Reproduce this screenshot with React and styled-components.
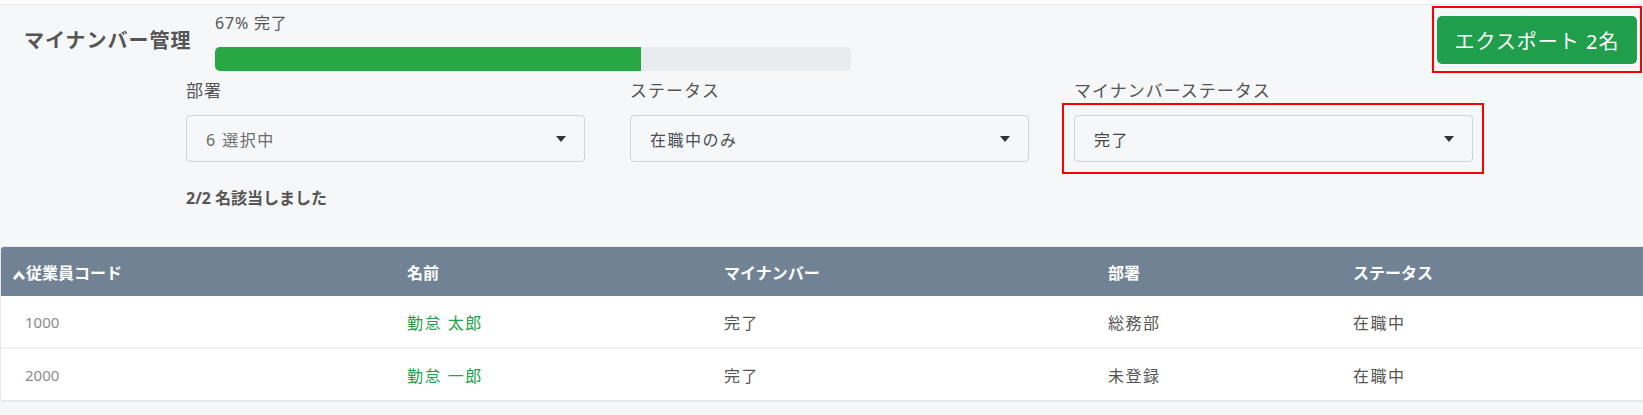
import React from "react";
import styled, { createGlobalStyle } from "styled-components";

const Global = createGlobalStyle`
  html, body { margin: 0; padding: 0; }
  body {
    background: #f6f7f9;
    font-family: "Noto Sans", "Noto Sans CJK JP", sans-serif;
    color: #555;
  }
  * { box-sizing: border-box; }
`;

const Page = styled.div`
  width: 1643px;
  min-height: 415px;
  background: #f6f7f9;
`;

const TopStrip = styled.div`
  height: 5px;
  background: #fff;
  border-bottom: 1px solid #e8eaed;
`;

const HeaderRow = styled.div`
  display: flex;
  align-items: flex-start;
  padding: 0 1px 0 24px;
`;

const Title = styled.h1`
  flex: 0 0 191px;
  margin: 0;
  padding-top: 23px;
  font-size: 20px;
  line-height: 26px;
  font-weight: 700;
  letter-spacing: 1px;
  color: #555;
`;

const ProgressBlock = styled.div`
  width: 636px;
  padding-top: 8px;
`;

const ProgressLabel = styled.div`
  font-size: 16px;
  line-height: 20px;
  letter-spacing: 0.8px;
  color: #555;
`;

const Track = styled.div`
  margin-top: 14px;
  height: 24px;
  border-radius: 5px;
  background: #e9ecef;
  overflow: hidden;
`;

const Fill = styled.div`
  height: 100%;
  background: #28a745;
`;

const Spacer = styled.div`
  flex: 1;
`;

const Highlight = styled.div`
  margin-top: 1px;
  border: 2px solid #ff0000;
  padding: 8px 3px 7px 3px;
`;

const ExportButton = styled.button`
  display: flex;
  align-items: center;
  justify-content: center;
  width: 200px;
  height: 48px;
  border: none;
  border-radius: 5px;
  background: #1f9e4b;
  color: #fff;
  font-family: inherit;
  font-size: 20px;
  letter-spacing: 1px;
  cursor: pointer;
`;

const Filters = styled.div`
  padding: 6px 0 0 186px;
`;

const FilterGrid = styled.div`
  display: grid;
  grid-template-columns: repeat(3, 399px);
  column-gap: 45px;
`;

const Field = styled.div`
  display: flex;
  flex-direction: column;
`;

const Label = styled.label`
  font-size: 17px;
  line-height: 24px;
  letter-spacing: 1px;
  color: #555;
  margin-bottom: 12px;
`;

const Select = styled.div`
  position: relative;
  display: flex;
  align-items: center;
  height: 47px;
  padding: 0 40px 0 19px;
  border: 1px solid #cdd4dc;
  border-radius: 4px;
  font-size: 16px;
  letter-spacing: 1.5px;
  color: ${(p) => p.$color || "#495057"};
  ${(p) =>
    p.$marked &&
    `&::after {
      content: "";
      position: absolute;
      left: -13px;
      right: -12px;
      top: -13px;
      bottom: -13px;
      border: 2px solid #ff0000;
      pointer-events: none;
    }`}
`;

const Caret = styled.span`
  position: absolute;
  right: 18px;
  top: 50%;
  margin-top: -3px;
  width: 0;
  height: 0;
  border-left: 5.5px solid transparent;
  border-right: 5.5px solid transparent;
  border-top: 6px solid #333;
`;

const Count = styled.div`
  margin-top: 24px;
  font-size: 16px;
  line-height: 24px;
  font-weight: 700;
  color: #555;
`;

const Card = styled.div`
  margin-top: 36px;
  background: #fff;
  border: 1px solid #e6e8eb;
  border-bottom-width: 2px;
  border-right: none;
  border-radius: 4px 0 0 4px;
  overflow: hidden;
`;

const Table = styled.table`
  width: 100%;
  border-collapse: collapse;
  table-layout: fixed;
`;

const Th = styled.th`
  height: 49px;
  padding: 0 0 0 ${(p) => (p.$first ? "11px" : "24px")};
  background: #718294;
  color: #fff;
  font-size: 16px;
  font-weight: 700;
  text-align: left;
  white-space: nowrap;
`;

const SortIcon = styled.svg`
  width: 14px;
  height: 12px;
  vertical-align: -2px;
`;

const Tr = styled.tr`
  & + & td { border-top: 2px solid #f1f2f3; }
`;

const Td = styled.td`
  height: 52px;
  padding: 0 0 0 24px;
  font-size: ${(p) => (p.$num ? "15px" : "16px")};
  letter-spacing: ${(p) => (p.$num ? "0" : "1.5px")};
  color: ${(p) => (p.$tone === "green" ? "#23a04a" : p.$tone === "muted" ? "#8a8a8a" : "#555")};
`;

const rows = [
  { code: "1000", name: "勤怠 太郎", my: "完了", dept: "総務部", status: "在職中" },
  { code: "2000", name: "勤怠 一郎", my: "完了", dept: "未登録", status: "在職中" },
];

export default function App() {
  const progress = 67;
  return (
    <Page>
      <Global />
      <TopStrip />
      <HeaderRow>
        <Title>マイナンバー管理</Title>
        <ProgressBlock>
          <ProgressLabel>{progress}% 完了</ProgressLabel>
          <Track>
            <Fill style={{ width: `${progress}%` }} />
          </Track>
        </ProgressBlock>
        <Spacer />
        <Highlight>
          <ExportButton>エクスポート 2名</ExportButton>
        </Highlight>
      </HeaderRow>
      <Filters>
        <FilterGrid>
          <Field>
            <Label>部署</Label>
            <Select $color="#6c6c6c">
              6 選択中
              <Caret />
            </Select>
          </Field>
          <Field>
            <Label>ステータス</Label>
            <Select>
              在職中のみ
              <Caret />
            </Select>
          </Field>
          <Field>
            <Label>マイナンバーステータス</Label>
            <Select $marked $color="#444">
              完了
              <Caret />
            </Select>
          </Field>
        </FilterGrid>
        <Count>2/2 名該当しました</Count>
      </Filters>
      <Card>
        <Table>
          <colgroup>
            <col style={{ width: 382 }} />
            <col style={{ width: 317 }} />
            <col style={{ width: 384 }} />
            <col style={{ width: 245 }} />
            <col />
          </colgroup>
          <thead>
            <tr>
              <Th $first>
                <SortIcon viewBox="0 0 14 12">
                  <polyline points="2,10 7,4 12,10" fill="none" stroke="#fff" strokeWidth="3" />
                </SortIcon>
                従業員コード
              </Th>
              <Th>名前</Th>
              <Th>マイナンバー</Th>
              <Th>部署</Th>
              <Th>ステータス</Th>
            </tr>
          </thead>
          <tbody>
            {rows.map((r) => (
              <Tr key={r.code}>
                <Td $num $tone="muted">{r.code}</Td>
                <Td $tone="green">{r.name}</Td>
                <Td>{r.my}</Td>
                <Td>{r.dept}</Td>
                <Td>{r.status}</Td>
              </Tr>
            ))}
          </tbody>
        </Table>
      </Card>
    </Page>
  );
}
